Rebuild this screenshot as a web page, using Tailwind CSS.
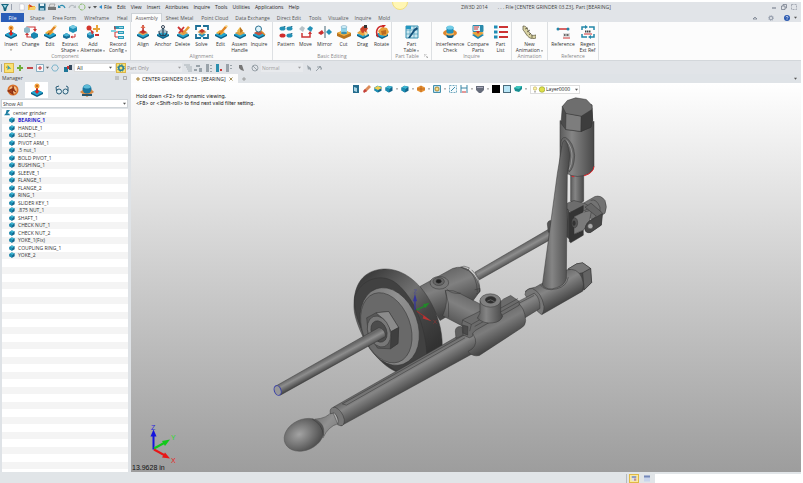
<!DOCTYPE html>
<html lang="en">
<head>
  <meta charset="UTF-8" />
  <meta name="viewport" content="width=device-width, initial-scale=1.0"/>
  <title>ZW3D 2014</title>
  <script src="https://cdn.jsdelivr.net/npm/@tailwindcss/browser@4"></script>
</head>
<body class="flex flex-col h-screen overflow-hidden bg-white pt-[2px] pr-[2px] font-['Open_Sans',sans-serif] text-[5px] leading-[6px] text-[#333]">

  <!-- icon set -->
  <svg class="hidden">
    <symbol id="slab" viewBox="0 0 14 14">
      <path d="M1 9.5 7 6.5l6 3v1.5l-6 3-6-3z" fill="#0b5f86"/>
      <path d="M1 9.5 7 6.5l6 3-6 3z" fill="#22a5cf"/>
    </symbol>
    <symbol id="insert" viewBox="0 0 14 14">
      <use href="#slab"/><path d="M6 5h2v4H6z" fill="#c42a20"/><path d="M4.5 8h5L7 11z" fill="#d22"/><circle cx="7" cy="3" r="2.5" fill="#f3a13a"/><circle cx="7" cy="3" r="1" fill="#b85a12"/>
    </symbol>
    <symbol id="change" viewBox="0 0 14 14">
      <path d="M3 5V2h8v3M3 9v3h8V9" fill="none" stroke="#c33" stroke-width="1.2"/><path d="m9 4 2 3 2-3zM5 10 3 7l-2 3z" fill="#c33"/>
      <path d="m0 3.500 3-2 3 2v3.500l-3 1.500L0 7z" fill="#8fb9c9"/><path d="m7 9 3-2 4 2v3l-4 2-3-2z" fill="#1b87b0"/>
    </symbol>
    <symbol id="edit" viewBox="0 0 14 14">
      <use href="#slab"/><path d="m2 8 4-3 5 2-4 3z" fill="#f0b23c"/><path d="m5 8 6-7 2 1.500L7 9z" fill="#e08522"/><path d="m11 1 2 1.500 1-1.500-2-1z" fill="#f7d27a"/><path d="m5 8-.500 2L7 9z" fill="#432"/>
    </symbol>
    <symbol id="extract" viewBox="0 0 14 14">
      <path d="m6 2 4-2 4 2v4l-4 2-4-2z" fill="#1f90b8"/><path d="m6 2 4 2 4-2-4-2z" fill="#79cbe2"/>
      <path d="m0 10 3.500-2L7 10v2.500L3.500 14 0 12.500z" fill="#176f98"/><path d="m0 10 3.500 1.500L7 10 3.500 8z" fill="#46b5d6"/><path d="M12 9v3H8" fill="none" stroke="#c33"/><path d="m9.500 10.500-2 1.500 2 1.500z" fill="#c33"/>
    </symbol>
    <symbol id="alternate" viewBox="0 0 14 14">
      <circle cx="3" cy="3" r="2.500" fill="#d3352b"/><path d="M7 3h3V0h2v3h2v2h-2v2h-2V5H7z" fill="#e7a33a"/><path d="m1 9 3-2 4 2v3l-4 2-3-2z" fill="#1a7da8"/><path d="m1 9 3 1.500L8 9 4 7z" fill="#55bcd9"/><path d="m4 4 4 3-2 3z" fill="#c33"/><path d="M9 9h4v2H9z" fill="#c33"/>
    </symbol>
    <symbol id="config" viewBox="0 0 14 14">
      <path d="M3 1h10v3H3zM7 6h6v3H7zM7 11h6v3H7z" fill="#2c9dba"/><path d="M3 2h1v10h3M4 7h3" fill="none" stroke="#c33"/><path d="M0 5h5v2H0z" fill="#7fd0df"/><path d="M8 2.500h4M8 7.500h4M8 12.500h4" stroke="#fff" stroke-width=".6"/>
    </symbol>
    <symbol id="align" viewBox="0 0 14 14">
      <use href="#slab"/><path d="m2 8 5-3 5 3-5 2.500z" fill="#d9a95e"/><path d="m3 7 4-2 4 2-4 2z" fill="#c2362b"/><path d="M6.300 0h1.500v7H6.300z" fill="#b22"/><path d="M4.500 3 7 0l2.500 3z" fill="#e06b4e"/>
    </symbol>
    <symbol id="anchor" viewBox="0 0 14 14">
      <use href="#slab"/><path d="m3 6 4-3 4 3-4 3z" fill="#9fb7c2"/><circle cx="7" cy="2" r="1.500" fill="none" stroke="#345"/><path d="M7 3v8M3 6c0 4 2 5 4 5s4-1 4-5" fill="none" stroke="#27435a" stroke-width="1.200"/>
    </symbol>
    <symbol id="delete" viewBox="0 0 14 14">
      <use href="#slab"/><path d="m2 8 5-3 5 3-5 2.500z" fill="#d9a95e"/><path d="M2 2 8 8M8 2 3 8" stroke="#c33" stroke-width="1.800"/><path d="m6 8 6-7 2 1.500-6 6.500z" fill="#e89a34"/>
    </symbol>
    <symbol id="solve" viewBox="0 0 14 14">
      <path d="M1 5V1h5M8 1h5v4M13 9v4H8M6 13H1V9" fill="none" stroke="#1c6f95" stroke-width="1.800"/><path d="m3 9.500 4-2 4 2-4 3z" fill="#2795bd"/><path d="m2.500 7 4.500-3 4.500 3L7 10z" fill="#d6a05c"/><path d="m4 6 3-2 3 2-3 2z" fill="#c2362b"/>
    </symbol>
    <symbol id="handle" viewBox="0 0 14 14">
      <use href="#slab"/><path d="m2 8 5-3 5 3-5 2.500z" fill="#dba043"/><path d="m4 6 3-4 3 4-3 2z" fill="#e9b648"/><path d="m7 2 3 4-3 2z" fill="#b87420"/>
    </symbol>
    <symbol id="inquire" viewBox="0 0 14 14">
      <use href="#slab"/><path d="m2 8 5-3 5 3-5 2.500z" fill="#c2513a"/><circle cx="6.500" cy="4" r="3" fill="#dff3fa" stroke="#2c7192"/><path d="m9 6 4 4" stroke="#d98a2b" stroke-width="1.500"/>
    </symbol>
    <symbol id="pattern" viewBox="0 0 14 14">
      <g fill="#2390b5"><ellipse cx="3.500" cy="3.500" rx="3" ry="2"/><ellipse cx="10.500" cy="3.500" rx="3" ry="2"/><ellipse cx="10.500" cy="10.500" rx="3" ry="2"/></g><ellipse cx="3.500" cy="10.500" rx="3" ry="2" fill="#cf2d2d"/><path d="m4 2 1.500-1 1.500 1M11 2l1.500-1L14 2M11 9l1.500-1L14 9" fill="#0d5c80"/>
    </symbol>
    <symbol id="move" viewBox="0 0 14 14">
      <path d="m0 4 3-3 3 2-2 4z" fill="#b9c2c7"/><path d="m8 4 3-3 3 2-2 4z" fill="#2390b5"/><path d="M3 8v4h8V8" fill="none" stroke="#c33" stroke-width="1.500"/><path d="m9 9 2-3 2 3z" fill="#c33"/>
    </symbol>
    <symbol id="mirror" viewBox="0 0 14 14">
      <path d="M7 1v12" stroke="#467" stroke-width="1"/><path d="m0 8 4-3 2 3-3 2z" fill="#c92f2f"/><path d="m14 7-3-3-3 3 3 3z" fill="#2390b5"/>
    </symbol>
    <symbol id="cut" viewBox="0 0 14 14">
      <path d="m0 8 7-3 7 3v3l-7 3-7-3z" fill="#b87420"/><path d="m0 8 7-3 7 3-7 3z" fill="#f1b142"/><path d="M4 2h6v6H4z" fill="#8fd2e6"/><ellipse cx="7" cy="2" rx="3" ry="1.500" fill="#cdeef7" stroke="#58a" stroke-width=".4"/><ellipse cx="7" cy="8" rx="3" ry="1.300" fill="#3b8fae"/>
    </symbol>
    <symbol id="drag" viewBox="0 0 14 14">
      <use href="#slab"/><path d="m1 8 5-4 6 3-5 4z" fill="#e6a33f"/><path d="m4 4 3-3 5 2-2 4-4 1z" fill="#c9452c"/><path d="M8 0h3v3H8z" fill="#333"/><path d="m8 6 4 3-3 2z" fill="#f6d79a"/>
    </symbol>
    <symbol id="rotate" viewBox="0 0 14 14">
      <use href="#slab"/><path d="m3 6 4-4 5 1 2 4-3 4-6-1z" fill="#e5a139"/><path d="m6 6 5-1v4l-4 1z" fill="#bb6a1e"/><path d="M3 12C0 7 2 1 8 1" fill="none" stroke="#cc2a2a" stroke-width="1.500"/><path d="M7 0h4L8 3z" fill="#c22"/>
    </symbol>
    <symbol id="table" viewBox="0 0 14 14">
      <path d="M1 1h12v12H1z" fill="#c9e7f0" stroke="#3a92b2"/><path d="M1 5h12M1 9h12M5 1v12M9 1v12" stroke="#3a92b2" stroke-width=".6"/><path d="m3 13 6-9 3-2 1 2-3 2-5 7z" fill="#124f79"/><path d="M1 1h5v3H1z" fill="#2397c0"/>
    </symbol>
    <symbol id="interference" viewBox="0 0 14 14">
      <ellipse cx="7" cy="8" rx="7" ry="3.500" fill="#e0862d"/><path d="M3.500 2h7v9h-7z" fill="#1f91bd"/><ellipse cx="7" cy="2.500" rx="3.500" ry="2" fill="#73cce6"/><ellipse cx="7" cy="11" rx="3.500" ry="2" fill="#105d86"/><path d="M3 7c1 2 7 2 8 0v2c-2 2-6 2-8 0z" fill="#f3b054"/>
    </symbol>
    <symbol id="compare" viewBox="0 0 14 14">
      <path d="m1 10 6-3 6 3-6 4z" fill="#1d85b0"/><path d="m1 8 6-3 6 3-6 4z" fill="#e5a33c"/><path d="M2 .500h10v6H2z" fill="#e3f3f8" stroke="#2b8bac"/><path d="M3 2h5M3 4h4" stroke="#c33"/><path d="M9 1h3v5H9z" fill="#2b8bac"/><path d="M5 6h4l-2 3z" fill="#c33"/>
    </symbol>
    <symbol id="list" viewBox="0 0 14 14">
      <path d="M5 2h9M5 7h9M5 12h9" stroke="#c33" stroke-width="1.800"/><path d="M0 .500h3.500v3H0zM0 5.500h3.500v3H0zM0 10.500h3.500v3H0z" fill="#1f8db5"/>
    </symbol>
    <symbol id="animation" viewBox="0 0 14 14">
      <path d="M1 1c4 0 4 3 6 6s3 4 7 3v3c-5 2-8-1-10-4S2 6 1 5z" fill="#d9d3a3" stroke="#55503a" stroke-width=".7"/><path d="m3 4 3-1M5 7l3-2M7 10l2-2M10 13v-3" stroke="#55503a" stroke-width=".8"/>
    </symbol>
    <symbol id="reference" viewBox="0 0 14 14">
      <path d="M1 4h12" stroke="#c33" stroke-width="1.500"/><circle cx="2" cy="4" r="1.500" fill="#2286a8"/><circle cx="12" cy="4" r="1.500" fill="#2286a8"/><path d="M7 8h7v4H7z" fill="#ddd"/><path d="M8 10h5" stroke="#444" stroke-width="1.500" stroke-dasharray="1 .5"/><path d="M7 13h7" stroke="#c33"/>
    </symbol>
    <symbol id="regen" viewBox="0 0 14 14">
      <path d="M1 5V2h4M8 2h5v3M13 9v3H9M6 12H1V9" fill="none" stroke="#2286a8" stroke-width="1.500"/><path d="m4 0 3 2-3 2zM10 10l-3 2 3 2z" fill="#2286a8"/><path d="M4 6.500h6" stroke="#444" stroke-width="2" stroke-dasharray="1.500 .5"/><path d="M3 9h8" stroke="#c33"/>
    </symbol>
    <symbol id="down" viewBox="0 0 4 4"><path d="M0 1h4L2 3.500z" fill="#555"/></symbol>
    <symbol id="cube" viewBox="0 0 8 8"><path d="m.500 2.500 3-1.800 4 1v4L4 7.500l-3.500-2z" fill="#12648a"/><path d="m.500 2.500 3-1.800 4 1L4.500 4z" fill="#3fb6d2"/><path d="m.500 2.500 4 1.500L4 7.500l-3.500-2z" fill="#1b8fb4"/></symbol>
    <symbol id="gear" viewBox="0 0 8 8"><circle cx="4" cy="4" r="2.300" fill="none" stroke="currentColor" stroke-width="1.600"/><circle cx="4" cy="4" r="3.400" fill="none" stroke="currentColor" stroke-dasharray="1.300 1.370"/></symbol>
  </svg>

  <!-- title bar and menu -->
  <header class="relative flex items-center h-[10px] shrink-0 bg-[#e1e4e8] overflow-hidden">
    <div class="absolute left-[392px] -top-2 size-4 rounded-full bg-[#fff6b4] border border-[#f3df7c]"></div>
    <div class="flex items-center gap-[2px] w-[104px] pl-px shrink-0">
      <svg class="size-2" viewBox="0 0 8 8"><path d="M0 1h8L6 4 5 8H3L2 4z" fill="#15667f"/><path d="M2 2h4L4 5z" fill="#9fd7e4"/></svg>
      <span class="w-px h-1.5 mr-1 bg-gray-400"></span>
      <button aria-label="New" class="size-2 px-px"><svg class="size-full" viewBox="0 0 8 8"><path d="M1 0h5l1 2v6H1z" fill="#fff" stroke="#aab" stroke-width=".6"/></svg></button>
      <button aria-label="Open" class="size-2"><svg class="size-full" viewBox="0 0 8 8"><path d="M0 2h3l1 1h3v4H0z" fill="#f0b534"/><path d="m1 1 4 3-3 2z" fill="#d23c2c"/><path d="M2 4h6L7 7H1z" fill="#f7cf69"/></svg></button>
      <button aria-label="Save" class="size-2"><svg class="size-full" viewBox="0 0 8 8"><path d="M.500.500h7v7h-7z" fill="#246b8a"/><path d="M2 .500h4v2.500H2z" fill="#e5f2f7"/><path d="M2 5h4v2.500H2z" fill="#9cc8d9"/></svg></button>
      <button aria-label="Print" class="size-2"><svg class="size-full" viewBox="0 0 8 8"><path d="M0 4h8v3H0z" fill="#777"/><path d="M2 1h5L6 4H1z" fill="#ddd" stroke="#777" stroke-width=".5"/></svg></button>
      <button aria-label="Undo" class="size-2"><svg class="size-full" viewBox="0 0 8 8"><path d="M1 4c2-2.500 5-2 6 1" fill="none" stroke="#2a8cb0" stroke-width="1.200"/><path d="M0 2v3h3z" fill="#2a8cb0"/></svg></button>
      <button aria-label="Redo" class="size-2"><svg class="size-full" viewBox="0 0 8 8"><path d="M7 4c-2-2.500-5-2-6 1" fill="none" stroke="#b8bec3" stroke-width="1.200"/><path d="M8 2v3H5z" fill="#b8bec3"/></svg></button>
      <button aria-label="Regenerate" class="size-2 text-[#86b866]"><svg class="size-full" viewBox="0 0 8 8"><circle cx="4" cy="4" r="3" fill="none" stroke="currentColor" stroke-dasharray="3 .8"/></svg></button>
      <svg class="size-[3px]"><use href="#down"/></svg>
      <svg class="size-1"><use href="#down"/></svg>
      <svg class="size-1" viewBox="0 0 4 4"><path d="M3 0v4L0 2z" fill="#2a8cd0"/></svg>
    </div>
    <nav class="flex gap-[5px] text-[#222] font-medium">
      <button>File</button><button>Edit</button><button>View</button><button>Insert</button><button>Attributes</button><button>Inquire</button><button>Tools</button><button>Utilities</button><button>Applications</button><button>Help</button>
    </nav>
    <h1 class="absolute left-[461px] flex gap-[10px] whitespace-pre text-[#444]"><span>ZW3D 2014</span><span>. . . File [CENTER GRINDER 03.Z3], Part [BEARING]</span></h1>
    <div class="flex items-center gap-1 ml-auto pr-1 text-gray-500">
      <button aria-label="Minimize" class="w-1.5 h-1"><svg class="size-full" viewBox="0 0 6 4"><path d="M1 3h4" stroke="currentColor"/></svg></button>
      <button aria-label="Restore" class="size-1.5"><svg class="size-full" viewBox="0 0 6 6"><path d="M.5 2h3.500v3.500H.5zM2 2V.5h3.500V4H4" fill="none" stroke="currentColor" stroke-width=".7"/></svg></button>
      <button aria-label="Close" class="size-1.5"><svg class="size-full" viewBox="0 0 6 6"><path d="M.5.5h5v5h-5z" fill="none" stroke="currentColor" stroke-width=".5" stroke-dasharray="2 1"/></svg></button>
    </div>
  </header>

  <!-- ribbon tabs -->
  <nav class="flex items-stretch h-[10px] shrink-0 pt-px bg-[#e1e4e8] text-[#555]">
    <button class="w-[23px] ml-px mr-0.5 bg-[#2a5db8] text-white">File</button>
    <button class="px-1">Shape</button>
    <button class="px-1">Free Form</button>
    <button class="px-1">Wireframe</button>
    <button class="px-1">Heal</button>
    <button class="px-[3px] bg-[#fcfcfc] border border-b-0 border-[#cdd2d7]">Assembly</button>
    <button class="px-1">Sheet Metal</button>
    <button class="px-1">Point Cloud</button>
    <button class="px-[3px]">Data Exchange</button>
    <button class="px-1">Direct Edit</button>
    <button class="px-1">Tools</button>
    <button class="px-[3px]">Visualize</button>
    <button class="px-[3px]">Inquire</button>
    <button class="px-1">Mold</button>
    <div class="flex items-center gap-2.5 ml-auto pr-1 text-gray-500">
      <button aria-label="Collapse ribbon" class="size-1.5"><svg class="size-full" viewBox="0 0 6 6"><path d="M1 4h4L3 2z" fill="none" stroke="currentColor" stroke-width=".7"/></svg></button>
      <button aria-label="Options" class="size-1.5 text-gray-400"><svg class="size-full"><use href="#gear"/></svg></button>
      <button aria-label="Help" class="flex items-center gap-1"><svg class="size-1.5" viewBox="0 0 6 6"><circle cx="3" cy="3" r="3" fill="#2a59b0"/><path d="M2 2.300c0-1.300 2-1.300 2 0 0 .7-1 .7-1 1.400M3 4.300v.700" fill="none" stroke="#fff" stroke-width=".7"/></svg><svg class="size-[3px]"><use href="#down"/></svg></button>
    </div>
  </nav>

  <!-- ribbon -->
  <div class="flex h-[39px] shrink-0 bg-[#fcfcfc] border-b border-[#d3d7db] text-center whitespace-nowrap">
    <section class="flex flex-col w-[131px] border-r border-[#dde0e3]">
      <div class="flex grow pl-px pt-[3px]">
        <button class="flex flex-col items-center w-5 gap-0.5"><svg class="size-3.5"><use href="#insert"/></svg><span class="flex flex-col items-center">Insert<svg class="size-[2px] mt-0.5"><use href="#down"/></svg></span></button>
        <button class="flex flex-col items-center w-[19px] gap-0.5"><svg class="size-3.5"><use href="#change"/></svg>Change</button>
        <button class="flex flex-col items-center w-5 gap-0.5"><svg class="size-3.5"><use href="#edit"/></svg>Edit</button>
        <button class="flex flex-col items-center w-5 gap-0.5"><svg class="size-3.5"><use href="#extract"/></svg><span>Extract<br>Shape <svg class="inline size-[2px]"><use href="#down"/></svg></span></button>
        <button class="flex flex-col items-center w-[26px] gap-0.5"><svg class="size-3.5"><use href="#alternate"/></svg><span>Add<br>Alternate <svg class="inline size-[2px]"><use href="#down"/></svg></span></button>
        <button class="flex flex-col items-center w-[24px] gap-0.5"><svg class="size-3.5"><use href="#config"/></svg><span>Record<br>Config <svg class="inline size-[2px]"><use href="#down"/></svg></span></button>
      </div>
      <h2 class="pb-px text-[#888]">Component</h2>
    </section>
    <section class="flex flex-col w-[142px] border-r border-[#dde0e3]">
      <div class="flex grow pl-0.5 pt-[3px]">
        <button class="flex flex-col items-center w-5 gap-0.5"><svg class="size-3.5"><use href="#align"/></svg>Align</button>
        <button class="flex flex-col items-center w-5 gap-0.5"><svg class="size-3.5"><use href="#anchor"/></svg>Anchor</button>
        <button class="flex flex-col items-center w-[19px] gap-0.5"><svg class="size-3.5"><use href="#delete"/></svg>Delete</button>
        <button class="flex flex-col items-center w-[19px] gap-0.5"><svg class="size-3.5"><use href="#solve"/></svg>Solve</button>
        <button class="flex flex-col items-center w-[19px] gap-0.5"><svg class="size-3.5"><use href="#edit"/></svg>Edit</button>
        <button class="flex flex-col items-center w-[19px] gap-0.5"><svg class="size-3.5"><use href="#handle"/></svg><span>Assem<br>Handle</span></button>
        <button class="flex flex-col items-center w-5 gap-0.5"><svg class="size-3.5"><use href="#inquire"/></svg>Inquire</button>
      </div>
      <h2 class="pb-px text-[#888]">Alignment</h2>
    </section>
    <section class="flex flex-col w-[119px] border-r border-[#dde0e3]">
      <div class="flex grow pl-[3px] pt-[3px]">
        <button class="flex flex-col items-center w-5 gap-0.5"><svg class="size-3.5"><use href="#pattern"/></svg>Pattern</button>
        <button class="flex flex-col items-center w-[19px] gap-0.5"><svg class="size-3.5"><use href="#move"/></svg>Move</button>
        <button class="flex flex-col items-center w-[19px] gap-0.5"><svg class="size-3.5"><use href="#mirror"/></svg>Mirror</button>
        <button class="flex flex-col items-center w-[19px] gap-0.5"><svg class="size-3.5"><use href="#cut"/></svg>Cut</button>
        <button class="flex flex-col items-center w-[19px] gap-0.5"><svg class="size-3.5"><use href="#drag"/></svg>Drag</button>
        <button class="flex flex-col items-center w-[19px] gap-0.5"><svg class="size-3.5"><use href="#rotate"/></svg>Rotate</button>
      </div>
      <h2 class="pb-px text-[#888]">Basic Editing</h2>
    </section>
    <section class="flex flex-col w-[40px] border-r border-[#dde0e3]">
      <div class="flex grow justify-center pt-[3px]">
        <button class="flex flex-col items-center gap-0.5"><svg class="size-3.5"><use href="#table"/></svg><span>Part<br>Table <svg class="inline size-[2px]"><use href="#down"/></svg></span></button>
      </div>
      <h2 class="flex justify-center items-center gap-[5px] pb-px text-[#888]">Part Table <svg class="size-1" viewBox="0 0 4 4"><path d="M0 3V0h3M1.500 1.500 4 4M4 2v2H2" fill="none" stroke="#999" stroke-width=".6"/></svg></h2>
    </section>
    <section class="flex flex-col w-[80px] border-r border-[#dde0e3]">
      <div class="flex grow pl-[3px] pt-[3px]">
        <button class="flex flex-col items-center w-[30px] gap-0.5"><svg class="size-3.5"><use href="#interference"/></svg><span>Interference<br>Check</span></button>
        <button class="flex flex-col items-center w-[26px] gap-0.5"><svg class="size-3.5"><use href="#compare"/></svg><span>Compare<br>Parts</span></button>
        <button class="flex flex-col items-center w-[19px] gap-0.5"><svg class="size-3.5"><use href="#list"/></svg><span>Part<br>List</span></button>
      </div>
      <h2 class="pb-px text-[#888]">Inquire</h2>
    </section>
    <section class="flex flex-col w-[36px] border-r border-[#dde0e3]">
      <div class="flex grow justify-center pt-[3px]">
        <button class="flex flex-col items-center gap-0.5"><svg class="size-3.5"><use href="#animation"/></svg><span>New<br>Animation <svg class="inline size-[2px]"><use href="#down"/></svg></span></button>
      </div>
      <h2 class="pb-px text-[#888]">Animation</h2>
    </section>
    <section class="flex flex-col w-[51px] border-r border-[#dde0e3]">
      <div class="flex grow pt-[3px]">
        <button class="flex flex-col items-center w-[30px] gap-0.5"><svg class="size-3.5"><use href="#reference"/></svg>Reference</button>
        <button class="flex flex-col items-center w-[19px] gap-0.5"><svg class="size-3.5"><use href="#regen"/></svg><span>Regen<br>Ext Ref</span></button>
      </div>
      <h2 class="pb-px text-[#888]">Reference</h2>
    </section>
  </div>

  <!-- selection toolbar -->
  <div class="flex items-center gap-[2px] h-[13px] shrink-0 pl-px bg-[#e1e4e8]">
    <span class="w-px h-2 bg-gray-400"></span>
    <button aria-label="Pick" class="size-2.5 p-px bg-[#fbe272] border border-[#dbb548]"><svg class="size-full" viewBox="0 0 8 8"><path d="M2 0v7l2-2h3z" fill="#3b9bb0"/><path d="M0 2h2v2H0z" fill="#c9a52c"/></svg></button>
    <button aria-label="Add" class="size-2"><svg class="size-full" viewBox="0 0 8 8"><path d="M3 1h2v2h2v2H5v2H3V5H1V3h2z" fill="#6fae3c"/></svg></button>
    <button aria-label="Remove" class="size-2"><svg class="size-full" viewBox="0 0 8 8"><path d="M1 3h6v2H1z" fill="#c4494c"/></svg></button>
    <button aria-label="Pick box" class="size-2"><svg class="size-full" viewBox="0 0 8 8"><path d="M.5.5h7v7h-7z" fill="#f5f8fa" stroke="#6f9cb4" stroke-width=".8"/><path d="M4 2v4M2 4h4" stroke="#c33"/></svg></button>
    <svg class="size-[3px]"><use href="#down"/></svg>
    <button aria-label="Lasso" class="size-2"><svg class="size-full" viewBox="0 0 8 8"><path d="m2.500 1h3L7.500 4l-2 3h-3L.5 4z" fill="none" stroke="#64a8c4" stroke-width=".8"/></svg></button>
    <button aria-label="Filter" class="size-2 ml-[3px]"><svg class="size-full" viewBox="0 0 8 8"><path d="M0 3h4v5H0z" fill="#1e7697"/><path d="M3 2h3v3H3z" fill="#c33"/><path d="M5 1h3v5H5z" fill="#34495e"/></svg></button>
    <div class="flex items-center shrink-0">
      <div class="relative w-[42px]">
        <select aria-label="Entity filter" class="appearance-none block w-full h-[9px] pl-0.5 bg-white border border-[#ddd] text-[#222]"><option>All</option></select>
        <svg class="absolute right-1 top-[3px] size-[3px]"><use href="#down"/></svg>
      </div>
      <button aria-label="Pick filter" class="size-2.5 bg-[#fbe272] border border-[#dbb548] text-[#2c8097]"><svg class="size-full" viewBox="0 0 8 8"><use href="#gear"/></svg></button>
      <div class="relative w-[56px]">
        <select aria-label="Scope" disabled class="appearance-none block w-full h-[9px] pl-px bg-[#e8eaed] text-[#8c8c8c]"><option>Part Only</option></select>
        <svg class="absolute right-px top-[3px] size-[3px] opacity-50"><use href="#down"/></svg>
      </div>
    </div>
    <div class="flex gap-[2px] text-[#9aa3aa]">
      <button aria-label="Display list" class="size-2"><svg class="size-full" viewBox="0 0 8 8"><path d="M0 1h6M2 3h6M3 5h5M4 7h4" stroke="currentColor" stroke-width=".8"/></svg></button>
      <button aria-label="Tree" class="size-2"><svg class="size-full" viewBox="0 0 8 8"><path d="M2 1h4v2H2zM0 5h3v2H0zM5 4h3v4H5z" fill="currentColor"/></svg></button>
      <button aria-label="Hide" class="size-2 ml-px"><svg class="size-full" viewBox="0 0 8 8"><path d="M1 0h3v8H1zM5 1h2v1H5zM5 4h2v1H5zM5 7h2v1H5z" fill="currentColor"/></svg></button>
      <button aria-label="Show" class="size-2 text-[#2c8fae]"><svg class="size-full" viewBox="0 0 8 8"><path d="M1 0h3v8H1z" fill="currentColor"/><path d="M5 5h2v2H5z" fill="#c33"/></svg></button>
      <button aria-label="Swap" class="size-2"><svg class="size-full" viewBox="0 0 8 8"><path d="M1 0h3v8H1zM5 1h2v1H5zM5 4h2v1H5z" fill="currentColor"/></svg></button>
      <button aria-label="Cursor" class="size-2 ml-0.5 text-[#777]"><svg class="size-full" viewBox="0 0 8 8"><path d="M2 1h3l1 3 1 3-3-1-2-2z" fill="currentColor"/></svg></button>
    </div>
    <button aria-label="None" class="size-2 ml-1 text-[#9aa3aa]"><svg class="size-full" viewBox="0 0 8 8"><circle cx="4" cy="4" r="3" fill="none" stroke="currentColor"/><path d="m2 2 4 4" stroke="currentColor"/></svg></button>
    <div class="relative w-[42px] shrink-0">
      <select aria-label="Style" disabled class="appearance-none block w-full h-[9px] pl-px bg-[#e8eaed] text-[#a0a0a0]"><option>Normal</option></select>
      <svg class="absolute right-0.5 top-[3px] size-[3px] opacity-50"><use href="#down"/></svg>
    </div>
    <button aria-label="Pointer" class="size-2 text-[#9aa3aa]"><svg class="size-full" viewBox="0 0 8 8"><path d="m2 1 1 5 1-1 2 2V4z" fill="currentColor"/></svg></button>
    <button aria-label="Link" class="size-2 text-[#9aa3aa]"><svg class="size-full" viewBox="0 0 8 8"><path d="m1 7 5-5M4 2l3 3M2 3h4v3" fill="none" stroke="currentColor"/></svg></button>
  </div>

  <main class="flex grow min-h-0 bg-[#dfe3e7]">
    <!-- manager panel -->
    <aside class="flex flex-col w-[128px] shrink-0 mr-[3px]">
      <div class="flex items-center h-[8px] pl-0.5 pr-px text-[#444]">Manager
        <button aria-label="Pin" class="ml-auto mr-1 size-1"><svg class="size-full" viewBox="0 0 4 4"><path d="M0 1h4M0 3h4" stroke="#888" stroke-width=".7"/></svg></button>
        <button aria-label="Close panel" class="size-1"><svg class="size-full" viewBox="0 0 4 4"><path d="M.5.500h3v3h-3z" fill="none" stroke="#888" stroke-width=".6"/></svg></button>
      </div>
      <div class="flex h-4">
        <button aria-label="History" class="flex justify-center items-center w-[25px]"><svg class="size-3" viewBox="0 0 12 12"><circle cx="6" cy="6" r="5.500" fill="#d9722b"/><circle cx="6" cy="6" r="3.800" fill="#f5c287"/><path d="M6 2v4l3 2M1 7l4-2 1 5z" stroke="#8c2f14" stroke-width="1.200" fill="#a8451d"/></svg></button>
        <button aria-label="Assembly" class="flex justify-center items-center w-[23px] bg-white"><svg class="size-3.5"><use href="#insert"/></svg></button>
        <button aria-label="View" class="flex justify-center items-center w-[27px]"><svg class="w-3.5 h-2.5" viewBox="0 0 14 10"><circle cx="4" cy="6.500" r="2.500" fill="#dcebf1" stroke="#2a5d78"/><circle cx="10.500" cy="6.500" r="2.500" fill="#dcebf1" stroke="#2a5d78"/><path d="M1.500 6 1 2l3-1M13 6V2l-2-1" fill="none" stroke="#2a5d78"/></svg></button>
        <button aria-label="Visual" class="flex justify-center items-center w-[23px]"><svg class="size-3.5" viewBox="0 0 14 14"><path d="m0 9 4-3h7l3 3-7 5z" fill="#d88a44"/><circle cx="7" cy="6" r="4.500" fill="#19759f"/><path d="M3 4c2-3 6-3 8 0-2 2-6 2-8 0" fill="#5dbbd8"/><path d="M2 11h10v2H2z" fill="#27556e"/></svg></button>
      </div>
      <div class="relative ml-px mt-px">
        <select aria-label="Show" class="appearance-none block w-full h-[9px] pl-px bg-white border border-[#cfd4d8] text-[#333]"><option>Show All</option></select>
        <svg class="absolute right-0.5 top-[3px] size-[3px]"><use href="#down"/></svg>
      </div>
      <div class="grow ml-0.5 mt-px bg-[repeating-linear-gradient(#fff_0_8px,#f4f4f4_8px_15px)]">
        <ul id="tree" class="grid auto-rows-fr h-[150px]"></ul>
      </div>
    </aside>

    <!-- document area -->
    <section class="flex flex-col grow min-w-0">
      <div class="flex items-center h-[9px] shrink-0">
        <button class="flex items-center gap-0.5 h-full px-[5px] bg-[#fdfdfd] whitespace-nowrap text-[#222]"><svg class="size-1" viewBox="0 0 4 4"><path d="M2 0v4M0 2h4" stroke="#a8812f"/></svg>CENTER GRINDER 03.Z3 - [BEARING]<svg class="size-1 ml-px" viewBox="0 0 4 4"><path d="m.500.500 3 3M3.500.500l-3 3" stroke="#8a7430" stroke-width=".8"/></svg></button>
        <button aria-label="New tab" class="size-1 ml-1"><svg class="size-full" viewBox="0 0 4 4"><path d="M2 0v4M0 2h4" stroke="#888" stroke-width=".7"/></svg></button>
        <svg class="size-[3px] ml-auto mr-1"><use href="#down"/></svg>
      </div>
      <div class="relative grow bg-linear-to-b from-white to-[#9d9d9d] overflow-hidden">
        <svg class="absolute inset-0 size-full" viewBox="131 83 670 388">
          <defs>
            <linearGradient id="up"><stop offset="0" stop-color="#5c5c5c"/><stop offset=".35" stop-color="#858585"/><stop offset="1" stop-color="#484848"/></linearGradient>
            <linearGradient id="tube" gradientUnits="userSpaceOnUse" x1="400" y1="386" x2="434" y2="446"><stop offset="0" stop-color="#626262"/><stop offset=".35" stop-color="#868686"/><stop offset="1" stop-color="#464646"/></linearGradient>
            <linearGradient id="rod" gradientUnits="userSpaceOnUse" x1="190" y1="350" x2="204" y2="376"><stop offset="0" stop-color="#686868"/><stop offset=".4" stop-color="#8d8d8d"/><stop offset="1" stop-color="#4c4c4c"/></linearGradient>
            <linearGradient id="rod2" gradientUnits="userSpaceOnUse" x1="215" y1="481" x2="230" y2="508"><stop offset="0" stop-color="#686868"/><stop offset=".4" stop-color="#8d8d8d"/><stop offset="1" stop-color="#4c4c4c"/></linearGradient>
            <linearGradient id="low" gradientUnits="userSpaceOnUse" x1="330" y1="565" x2="368" y2="635"><stop offset="0" stop-color="#6a6a6a"/><stop offset=".35" stop-color="#858585"/><stop offset="1" stop-color="#464646"/></linearGradient>
            <linearGradient id="hub" gradientUnits="userSpaceOnUse" x1="20" y1="545" x2="62" y2="650"><stop offset="0" stop-color="#6a6a6a"/><stop offset=".35" stop-color="#808080"/><stop offset="1" stop-color="#464646"/></linearGradient>
            <linearGradient id="arm" gradientUnits="userSpaceOnUse" x1="75" y1="620" x2="40" y2="690"><stop offset="0" stop-color="#6f6f6f"/><stop offset=".4" stop-color="#808080"/><stop offset="1" stop-color="#5c5c5c"/></linearGradient>
            <linearGradient id="sleeve" gradientUnits="userSpaceOnUse" x1="145" y1="680" x2="185" y2="755"><stop offset="0" stop-color="#6a6a6a"/><stop offset=".4" stop-color="#7c7c7c"/><stop offset="1" stop-color="#464646"/></linearGradient>
            <linearGradient id="tire" gradientUnits="userSpaceOnUse" x1="330" y1="90" x2="530" y2="310"><stop offset="0" stop-color="#3e3e3e"/><stop offset=".4" stop-color="#707070"/><stop offset=".65" stop-color="#454545"/><stop offset="1" stop-color="#303030"/></linearGradient>
            <linearGradient id="rim" x1="0" y1="0" x2="1" y2="1"><stop offset="0" stop-color="#6b6b6b"/><stop offset=".5" stop-color="#919191"/><stop offset="1" stop-color="#777"/></linearGradient>
            <radialGradient id="ball" cx=".4" cy=".42" r=".65"><stop offset="0" stop-color="#a3a3a3"/><stop offset=".45" stop-color="#7b7b7b"/><stop offset="1" stop-color="#484848"/></radialGradient>
          </defs>

          <!-- column, yoke and hub -->
          <g transform="translate(440 90) scale(.3333)" stroke="#333" stroke-width="1.500" stroke-linejoin="round">
            <path d="M105 545 328 415v34L118 568z" fill="url(#rod2)"/>
            <path d="M322 400q2-12 15-10v35h-12z" fill="#555"/>
            <path d="M392 250v82q18 14 39 0v-82z" fill="url(#up)"/>
            <path d="m430 338 35-20q18-5 30 12 8 20 0 38l-30 20-28-10z" fill="#737373"/>
            <path d="M452 330q16-8 28 20 3 18-6 30" fill="none"/>
            <path d="m382 338 20-8 30 8 22 12-20 10-40 5-12-8z" fill="#6d6d6d"/>
            <path d="m382 355 8 12v80l-10-8z" fill="#444"/>
            <path d="m388 367 42-22v20l-28 14v52l28-12v15l-38 23-4-4z" fill="#343434"/>
            <path d="m402 379 28-14 25-6-8 40-17 20-28 12z" fill="#7b7b7b"/>
            <ellipse cx="404" cy="397" rx="9" ry="15" fill="#555"/>
            <ellipse cx="402" cy="398" rx="4" ry="7" fill="#333"/>
            <path d="m435 350 18-12 35 30-4 35-32 22q-16 3-17-10 3-22 24-30l10-8z" fill="#666"/>
            <path d="m460 385 26-15-2 34-32 22q-16 3-17-10 3-22 25-31" fill="#474747"/>
            <circle cx="451" cy="407" r="8" fill="#aaa"/>

            <path d="M360 90v132q12 34 52 36 46-3 50-30V92q-50 35-102-2" fill="url(#up)"/>
            <path d="M432 256q28-8 30-28M395 257l8 2" fill="none" stroke="#e0252b" stroke-width="3"/>
            <path d="m367 48-4 50 14 19 46 6 30-13 5-22-2-45-60-15z" fill="#4c4c4c"/>
            <path d="m378 68 46 9-1 46-46-6z" fill="#7d7d7d"/>
            <path d="m424 77 32-24 2 36-5 21-30 13z" fill="#3d3d3d"/>
            <path d="m367 48 15-18 25-8 32 5 17 18v12l-32 20-46-8z" fill="#6e6e6e"/>
            <path d="M362 165q0-26 15-24 24 14 27 54-2 40-17 50l-8-50z" fill="#686868"/>
            <path d="M380 150q18 25 16 50-1 25-9 38" fill="none" stroke="#999" stroke-width="3"/>

            <path d="m385 535 25-15 18-3 24 17 3 42-22 22-30 4z" fill="#4a4a4a"/>
            <path d="m385 535 25-15 18-3 24 17-24 13-20 3z" fill="#787878"/>
            <path d="m428 547 24-13 3 42-22 22z" fill="#636363"/>
            <path d="M256 602q8-9 30-12l95-52q30-7 44 22 10 22 3 42l-122 70q-20-25-50-70" fill="url(#low)"/>
            <path d="M255 612q2-18 22-18 28 12 35 54 0 20-8 24l-12-10v-24l-22-18-8 4z" fill="#777"/>
            <path d="m366 165-14 85-45 334q15 18 42 8 25-8 30-28l3-310 8-60q-8-45-17-45-6 4-7 16" fill="url(#up)"/>
            <path d="M300 582q15 22 50 13 30-7 35-35" fill="none"/>

            <path d="m225 638 58-30q18 14 17 46l-58 36z" fill="url(#low)"/>
            <path d="m230 642 52-27" fill="none"/>

            <path d="M-60 588 38 534q30-10 50 6 30 25 32 62l-22 30L0 690z" fill="url(#hub)"/>
            <path d="m62 530 10-3 16 5-4 8zM85 540q26 18 27 65M95 538q25 22 25 65M104 598l16-4-2 12-10 5" fill="none"/>
            <ellipse cx="-2" cy="577" rx="28" ry="19" fill="#777"/>
            <ellipse cx="-4" cy="573" rx="17" ry="12" fill="#666"/>
            <ellipse cx="-4" cy="572" rx="8" ry="6" fill="#222"/>
            <path d="M16 600q25-3 46 10l76 40-64 60-66-34q18-40 8-76" fill="url(#arm)"/>
            <path d="M16 600q14 40 10 81M62 608q-26 4-42-12" fill="none"/>
          </g>

          <!-- wheel, shaft and handle -->
          <g transform="translate(265 240) scale(.3333)" stroke="#333" stroke-width="1.500" stroke-linejoin="round">
            <path d="M267 190C268 130 295 92 350 86 410 80 465 125 497 185 525 235 535 290 531 335L410 400C360 385 315 335 290 280 272 240 266 215 267 190z" fill="url(#tire)"/>
            <path d="M269 170C285 118 350 92 396 130 445 170 484 255 486 355L410 398C350 380 262 260 269 170z" fill="#414141"/>
            <ellipse cx="374" cy="258" rx="84" ry="120" transform="rotate(-20 374 258)" fill="url(#rim)"/>
            <ellipse cx="364" cy="262" rx="72" ry="109" transform="rotate(-20 364 262)" fill="#696969"/>
            <path d="m305 232 28-15 38-4 30 48-2 48-23 16-38-2-28-40z" fill="#595959"/>
            <path d="m333 217 38-4 30 48-22 12-22-36z" fill="#8b8b8b"/>
            <path d="m379 273 22-12-2 48-23 16z" fill="#3f3f3f"/>
            <ellipse cx="342" cy="273" rx="33" ry="48" transform="rotate(-20 342 273)" fill="#787878"/>
            <ellipse cx="342" cy="273" rx="23" ry="33" transform="rotate(-20 342 273)" fill="#4c4c4c"/>
            <path d="m32 437 310-176q18 4 20 27L46 464z" fill="url(#rod)"/>
            <ellipse cx="38" cy="450" rx="10" ry="15" transform="rotate(-20 38 450)" fill="#999" stroke="#3940a8" stroke-width="3"/>

            <path d="m205 500 435-248v78L228 556z" fill="url(#tube)"/>
            <path d="M600 282 232 490l12 4 356-202" fill="none"/>
            <path d="M150 536q36-2 52-24l16 38q-28 8-44 42z" fill="url(#rim)" stroke="#444"/>
            <path d="M196 520q-4-20 14-20 22 10 28 38 0 18-10 18l-10-3q6-20-10-36z" fill="#777"/>
            <ellipse cx="117" cy="583" rx="62" ry="46" transform="rotate(-25 117 583)" fill="url(#ball)" stroke="#555"/>
            <path d="M142 536q30 15 34 50" fill="none"/>

            <path d="M450 208v-30" stroke="#35359c" stroke-width="4"/><path d="m450 160-6 22h12z" fill="#35359c" stroke="none"/>
            <path d="m455 208 26-12" stroke="#22882a" stroke-width="4"/><path d="m494 187-20 4 6 12z" fill="#22882a" stroke="none"/>
            <path d="m455 212 24 16" stroke="#a82b2b" stroke-width="3"/><path d="m500 242-24-18-3 10z" fill="#b33" stroke="none"/>
            <path d="M447 148h8l-8 10h8" fill="none" stroke="#4545a0"/><path d="m505 238 10 12m0-12-10 12" stroke="#933"/>
          </g>

          <!-- slide sleeve -->
          <g transform="translate(440 90) scale(.3333)" stroke="#333" stroke-width="1.500" stroke-linejoin="round">
            <path d="M46 722q0-14 16-14l16 8v14l-30 14z" fill="#5f5f5f"/>
            <path d="m88 720 140-88q27 18 29 58-1 16-12 22l-127 83q-20 5-34-12 28-13 22-38-6-17-18-25" fill="url(#sleeve)"/>
            <path d="m66 700 2-12 52-26 40-8 30-28 22-11 25 17 1 12-132 76q-10 6-9 18l-9 4-20-10z" fill="#6b6b6b"/>
            <path d="m68 689 26 13 140-78M94 702l-5 20M104 708l132-74" fill="none"/>
            <path d="m68 704 16 4-1 26-14-6z" fill="#4a4a4a"/>
            <path d="M120 630v38l-8 15q20 18 46 14 24-2 30-20l-6-10v-37z" fill="url(#up)"/>
            <ellipse cx="151" cy="630" rx="31" ry="20" fill="#808080"/>
            <ellipse cx="152" cy="628" rx="16" ry="10" fill="#2f2f2f"/>
            <path d="m142 632 10-4 12 6" fill="none" stroke="#999"/>
          </g>

          <!-- axis triad -->
          <g fill="none" stroke-width="2">
            <path d="M153.500 449v-14" stroke="#1414dd"/><path d="m153.500 429-3 7h6z" fill="#1414dd"/>
            <path d="m154 448 11-6" stroke="#12c91a"/><path d="m170 439-8 1.500 3 5z" fill="#12c91a"/>
            <path d="m154 449 11 6" stroke="#e81717"/><path d="m170 458-5-6-3 5z" fill="#e81717"/>
          </g>
          <g class="font-['Liberation_Sans',sans-serif] text-[7px]">
            <text x="151" y="429" fill="#2a2add">Z</text><text x="171" y="439" fill="#2bdd2b">Y</text><text x="171" y="462" fill="#e82020">X</text>
          </g>
        </svg>

        <!-- view toolbar -->
        <div class="absolute left-[221px] top-px flex items-center gap-[3px] h-2.5">
          <button aria-label="Exit" class="size-2"><svg class="size-full" viewBox="0 0 8 8"><path d="M1 0h6v8H1z" fill="#246c8e"/><path d="m2 2 3 1v4L2 6z" fill="#aad5e4"/></svg></button>
          <button aria-label="Erase" class="size-2"><svg class="size-full" viewBox="0 0 8 8"><path d="m1 5 5-5 2 2-5 5z" fill="#dd8c5a"/><path d="m0 6 2-2 2 2-3 2z" fill="#c4413b"/></svg></button>
          <button aria-label="Blank" class="size-2"><svg class="size-full" viewBox="0 0 8 8"><use href="#cube"/><path d="m0 3 4-2 4 2-4 2z" fill="#f3ce4c"/></svg></button>
          <button aria-label="Isometric" class="size-2"><svg class="size-full"><use href="#cube"/></svg></button><svg class="size-[2px]"><use href="#down"/></svg>
          <button aria-label="Shaded" class="size-2"><svg class="size-full"><use href="#cube"/></svg></button><svg class="size-[2px]"><use href="#down"/></svg>
          <button aria-label="Appearance" class="size-2"><svg class="size-full" viewBox="0 0 8 8"><path d="m0 2.500 4-2 4 2v3l-4 2-4-2z" fill="#e79335"/><path d="M0 4h8M4 1v6" stroke="#b55c16" stroke-width=".7"/></svg></button><svg class="size-[2px]"><use href="#down"/></svg>
          <button aria-label="Zoom" class="size-2"><svg class="size-full" viewBox="0 0 8 8"><path d="M.5.500h7v7h-7z" fill="#bde0ec" stroke="#4590ad"/><circle cx="4" cy="4" r="2" fill="#f4df8f" stroke="#b88b32"/></svg></button><svg class="size-[2px]"><use href="#down"/></svg>
          <button aria-label="Fit" class="size-2"><svg class="size-full" viewBox="0 0 8 8"><path d="M.5.500h7v7h-7z" fill="#f4fafc" stroke="#76abc0" stroke-dasharray="2 1"/><path d="m2 6 4-4" stroke="#4590ad"/></svg></button>
          <button aria-label="Section" class="size-2"><svg class="size-full" viewBox="0 0 8 8"><path d="M1 0v8M7 0v8M1 3h6" stroke="#3b87a6"/><path d="M2 7h4" stroke="#c33"/></svg></button><svg class="size-[2px]"><use href="#down"/></svg>
          <button aria-label="Render mode" class="size-2"><svg class="size-full" viewBox="0 0 8 8"><path d="M0 1h8v4L5 8H3L0 5z" fill="#666c7b"/><path d="M1 2h6v1H1z" fill="#aab"/></svg></button><svg class="size-[2px]"><use href="#down"/></svg>
          <button aria-label="Line color" class="size-2 bg-black"></button>
          <button aria-label="Face color" class="size-2 bg-[#b9e6f7] border border-[#4a6c7c]"></button>
          <button aria-label="Plane" class="size-2"><svg class="size-full" viewBox="0 0 8 8"><path d="m0 3 3-2h5v3L5 7 1 6z" fill="#168e91"/><path d="m0 3 3-2h5L5 4z" fill="#41c6bd"/></svg></button><svg class="size-[2px]"><use href="#down"/></svg>
          <div class="relative w-[50px]">
            <select aria-label="Layer" class="appearance-none block w-full h-[9px] pl-[15px] bg-white border border-[#ddd] text-[#222]"><option>Layer0000</option></select>
            <svg class="absolute left-[3px] top-px w-3 h-[7px]" viewBox="0 0 12 7"><circle cx="2" cy="2.500" r="1.700" fill="#fff4a8" stroke="#b5a24a" stroke-width=".6"/><path d="M1.500 5h1v1.500h-1z" fill="#777"/><circle cx="9" cy="3.500" r="2.800" fill="#dfe04a" stroke="#8f9a28" stroke-width=".6"/></svg>
            <svg class="absolute right-0.5 top-[3px] size-[3px]"><use href="#down"/></svg>
          </div>
        </div>

        <p class="absolute left-[5px] top-[10px] font-['Inter',sans-serif] leading-[7px] text-[#111]">Hold down &lt;F2&gt; for dynamic viewing.<br>&lt;F8&gt; or &lt;Shift-roll&gt; to find next valid filter setting.</p>
        <p class="absolute left-px bottom-0 font-['Liberation_Sans',sans-serif] text-[7px] leading-[8px] text-[#111]">13.9628 in</p>
      </div>
    </section>
  </main>

  <!-- status bar -->
  <footer class="flex items-stretch h-[11px] shrink-0 pt-0.5 bg-[#e1e5e8]">
    <div class="w-[627px] border-r border-[#b5babf]"></div>
    <button aria-label="Layout" class="w-2.5 p-px ml-0.5 bg-[#fbe9a0] border border-[#dfb947]"><svg class="size-full" viewBox="0 0 8 6"><path d="M1 0h6v6H1z" fill="#d8dfee"/><path d="M1 0h6v2H1z" fill="#7488b8"/><path d="M4 3h3v3H4z" fill="#c98d8d"/></svg></button>
    <button aria-label="Window" class="w-2.5 p-px ml-[3px]"><svg class="size-full" viewBox="0 0 8 6"><path d="M1 0h6v6H1z" fill="#c9d5ec"/><path d="M1 0h6v2H1z" fill="#7488b8"/></svg></button>
    <input aria-label="Command" class="grow min-w-0 ml-[3px] px-0.5 bg-white">
  </footer>

  <script>
    const parts = [
      "BEARING_1", "HANDLE_1", "SLIDE_1", "PIVOT ARM_1", ".5 nut_1", "BOLD PIVOT_1", "BUSHING_1",
      "SLEEVE_1", "FLANGE_1", "FLANGE_2", "RING_1", "SLIDER KEY_1", ".875 NUT_1", "SHAFT_1",
      "CHECK NUT_1", "CHECK NUT_2", "YOKE_1(Fix)", "COUPLING RING_1", "YOKE_2"
    ];
    const tree = document.getElementById("tree");

    tree.innerHTML = `<li class="flex items-center gap-[3px] pl-0.5"><svg class="w-1.5 h-1.5" viewBox="0 0 7 7"><path d="m0 6 2-2h4l1 2zM3 0h4L4 4H2z" fill="#1e7fa3"/></svg>center grinder</li>`;
    parts.forEach((name, i) => {
      const li = document.createElement("li");
      li.className = i === 0
        ? "flex items-center gap-[3px] pl-[7px] font-bold text-[#2a22cc]"
        : "flex items-center gap-[3px] pl-[7px]";
      li.innerHTML = `<svg class="size-1.5"><use href="#cube"/></svg>${name}`;
      tree.appendChild(li);
    });
  </script>
</body>
</html>
